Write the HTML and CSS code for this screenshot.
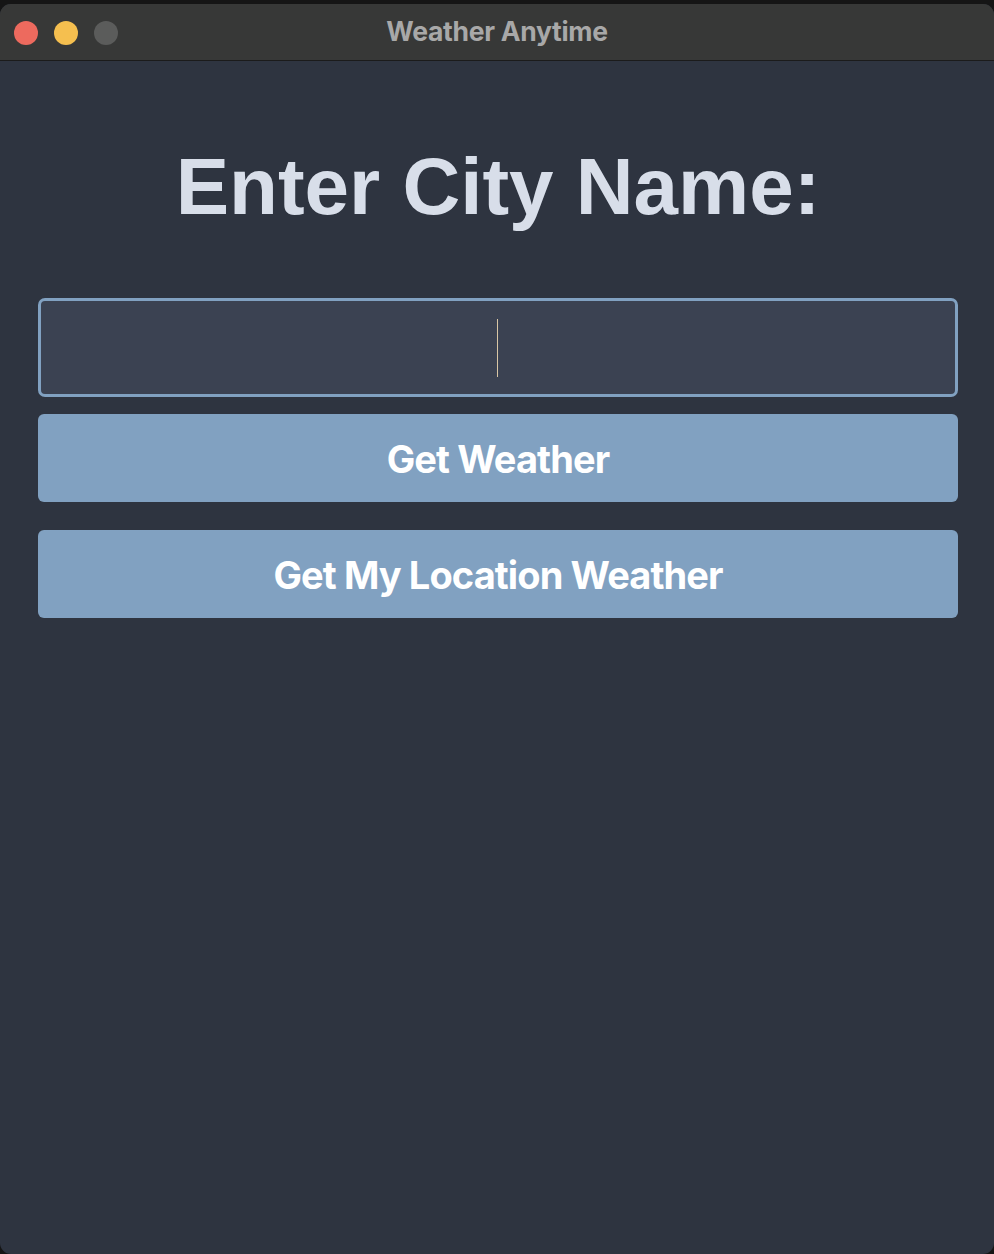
FILE: index.html
```html
<!DOCTYPE html>
<html>
<head>
<meta charset="utf-8">
<link rel="stylesheet" href="styles.css">
<title>Weather Anytime</title>
</head>
<body>
<div class="window">
  <div class="titlebar">
    <div class="lights">
      <span class="light red"></span>
      <span class="light yellow"></span>
      <span class="light gray"></span>
    </div>
    <div class="wtitle">Weather Anytime</div>
  </div>
  <div class="content">
    <h1 class="heading">Enter City Name:</h1>
    <div class="field"><span class="caret"></span></div>
    <div class="btn btn-first">Get Weather</div>
    <div class="btn btn-second">Get My Location Weather</div>
  </div>
</div>
</body>
</html>
```
FILE: styles.css
```css
html, body {
  margin: 0;
  padding: 0;
  background: #151515;
  height: 100%;
}
body {
  padding-top: 4px;
  box-sizing: border-box;
}
.window {
  height: 1250px;
  background: #2e3440;
  border-radius: 11px;
  overflow: hidden;
  display: flex;
  flex-direction: column;
}
.titlebar {
  height: 56px;
  background: #373837;
  border-bottom: 1px solid #1b1b1b;
  display: flex;
  align-items: center;
  position: relative;
  flex-shrink: 0;
}
.lights {
  display: flex;
  gap: 16px;
  padding-left: 14px;
  padding-top: 1px;
}
.light {
  width: 24px;
  height: 24px;
  border-radius: 50%;
  display: block;
}
.red { background: #ed6a5e; }
.yellow { background: #f5bf4f; }
.gray { background: #5b5c5b; }
.wtitle {
  position: absolute;
  left: 0;
  right: 0;
  top: 0;
  bottom: 0;
  display: flex;
  align-items: center;
  justify-content: center;
  font-family: Inter, "Open Sans", sans-serif;
  font-weight: 700;
  font-size: 26.5px;
  color: #a8a8a8;
  letter-spacing: -0.3px;
  padding-bottom: 3px;
}
.content {
  display: flex;
  flex-direction: column;
  padding: 0 36px 0 38px;
}
.heading {
  margin: 86px 0 0 0;
  font-family: "Liberation Sans", Arial, sans-serif;
  font-weight: 700;
  font-size: 80px;
  line-height: 80px;
  color: #d8dee9;
  text-align: center;
}
.field {
  margin-top: 71px;
  height: 93px;
  border: 3px solid #81a1c1;
  border-radius: 7px;
  background: #3b4252;
  display: flex;
  align-items: center;
  justify-content: center;
}
.caret {
  display: block;
  width: 1px;
  height: 58px;
  background: #d9c6a5;
  margin-left: -2px;
}
.btn {
  height: 88px;
  border-radius: 6px;
  background: #81a1c1;
  color: #ffffff;
  font-family: Inter, "Open Sans", sans-serif;
  font-weight: 700;
  font-size: 38px;
  letter-spacing: -0.9px;
  display: flex;
  align-items: center;
  justify-content: center;
  padding-top: 2px;
  box-sizing: border-box;
}
.btn-first { margin-top: 17px; }
.btn-second { margin-top: 28px; }
```
